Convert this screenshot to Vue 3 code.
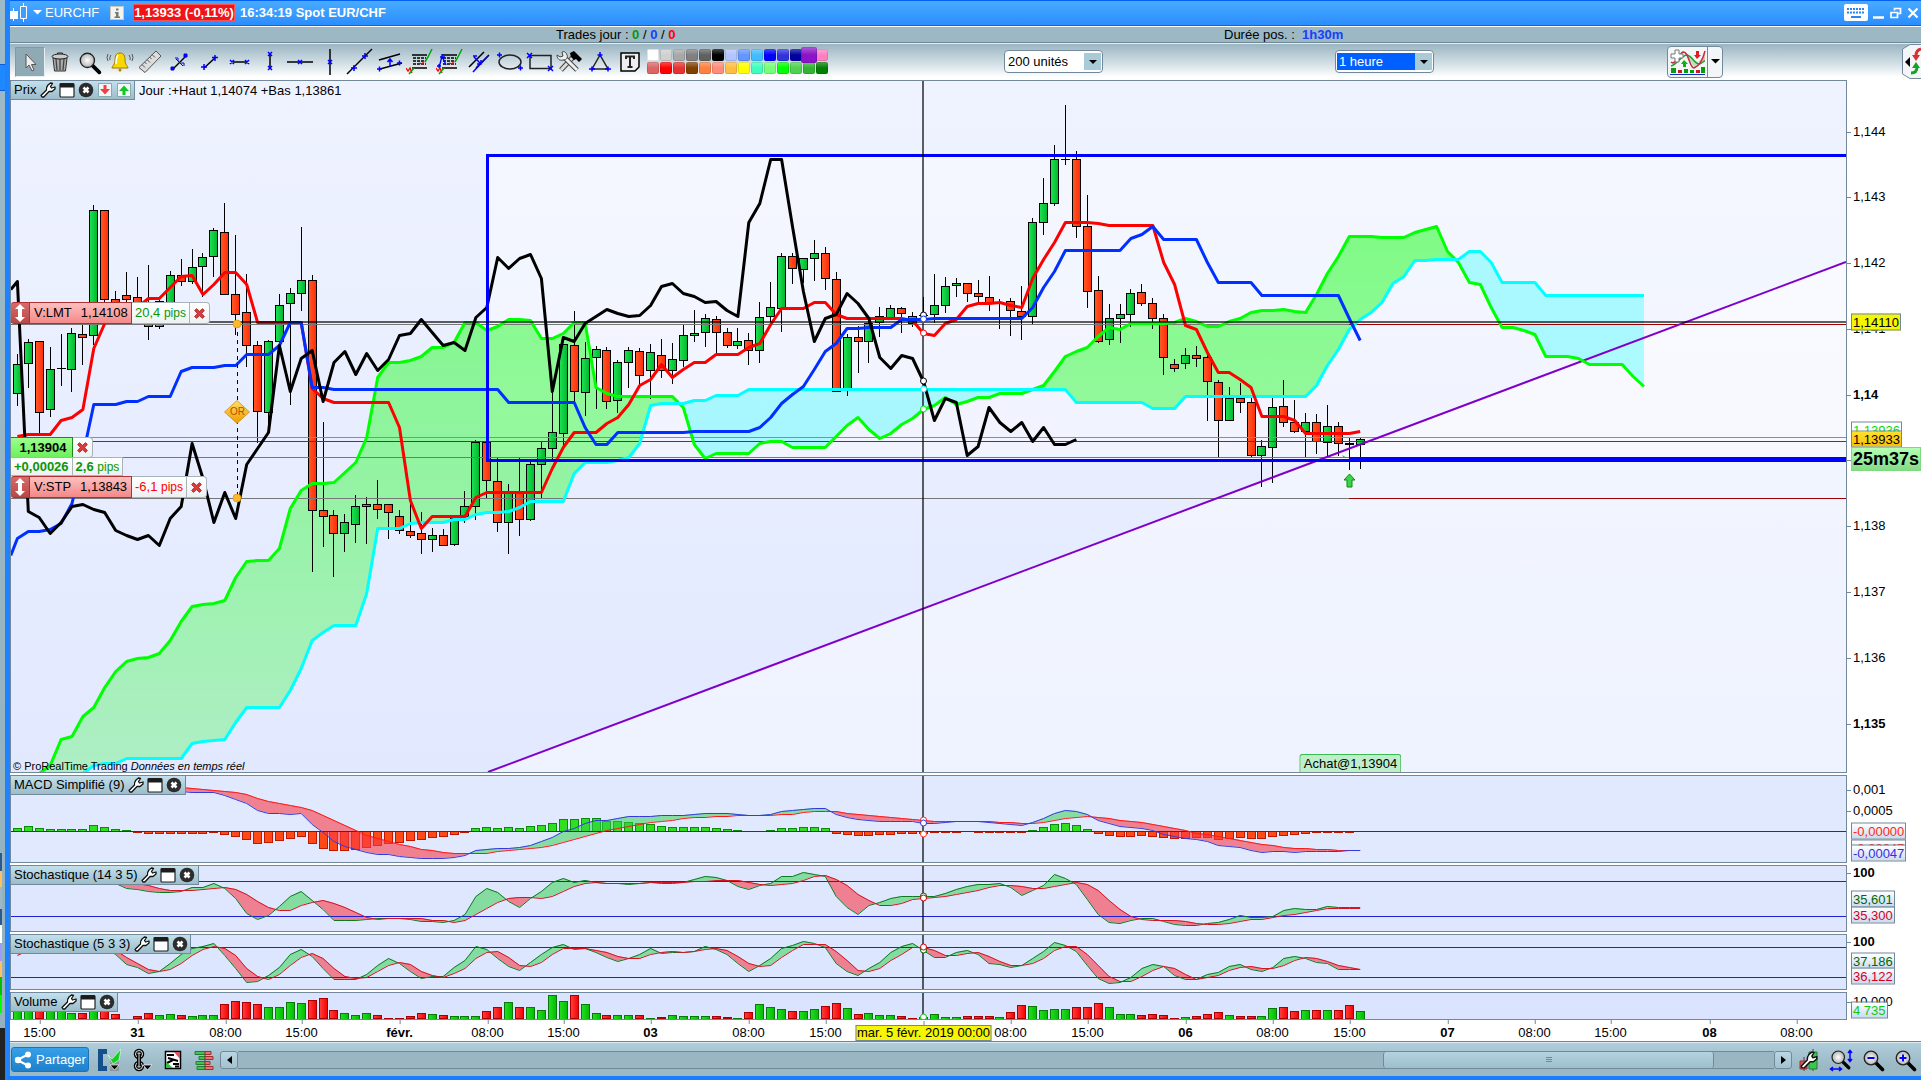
<script setup>
import { ref } from 'vue'

const STEP = 10.917
const LEFT = 11
const WIDTH = 1835
const bx = i => 17.4 + i * STEP
const px = i => Math.floor(bx(i))

// Series are written as "value" or "valuexcount" for repeated values.
const series = (text, start = 0) => {
  const out = []
  let i = start
  for (const part of text.trim().split(/\s+/)) {
    const [v, n] = part.split('x')
    for (let k = 0; k < Number(n || 1); k++) out.push([i++, Number(v)])
  }
  return out
}
const points = list => list.map(([i, y]) => bx(i).toFixed(1) + ',' + (y + 0.5)).join(' ')

// Area between two series, split wherever they cross.
const areas = (a, b) => {
  const mb = new Map(b)
  const both = a.filter(([i]) => mb.has(i)).map(([i, y]) => [i, y, mb.get(i)])
  let up = ''
  let down = ''
  for (let k = 0; k < both.length - 1; k++) {
    const [i0, a0, b0] = both[k]
    const [i1, a1, b1] = both[k + 1]
    const d0 = b0 - a0
    const d1 = b1 - a1
    const x0 = bx(i0)
    const x1 = bx(i1)
    if (d0 * d1 < 0) {
      const t = d0 / (d0 - d1)
      const xm = x0 + (x1 - x0) * t
      const ym = a0 + (a1 - a0) * t
      const first = `M${x0} ${a0}L${xm} ${ym}L${x0} ${b0}Z`
      const second = `M${xm} ${ym}L${x1} ${a1}L${x1} ${b1}Z`
      if (d0 > 0) { up += first; down += second } else { down += first; up += second }
    } else {
      const q = `M${x0} ${a0}L${x1} ${a1}L${x1} ${b1}L${x0} ${b0}Z`
      if (d0 + d1 >= 0) up += q
      else down += q
    }
  }
  return { up, down }
}

// colour, high, body top, body bottom, low
const candles = `g354,364,393,406 g339,342,363,388 r341,341,412,433 g347,369,409,417 d334,368,368,386 g328,333,369,392 r325,334,337,365
g205,210,335,345 r210,210,299,305 r291,299,310,312 r272,295,299,302 r277,297,310,315 r265,308,326,340 g300,301,326,329 g271,275,302,304
r259,275,281,286 g249,267,281,284 g253,257,266,297 g228,230,256,277 r203,232,294,294 r235,294,314,335 r274,312,345,367 r341,345,411,443
g340,341,412,430 g294,305,341,346 g288,293,303,405 g227,280,293,311 r275,280,510,572 r422,510,516,547 r510,515,533,577 g514,522,533,552
g495,506,524,543 g497,504,506,544 r480,504,509,519 r504,504,512,539 r510,516,530,534 r503,531,535,538 r512,533,539,554 g528,535,539,552
r529,535,545,546 g515,518,544,546 g491,506,516,523 g440,442,506,520 r442,442,480,499 r458,481,522,532 g484,493,522,554 r458,493,519,536
g462,464,519,521 g442,448,464,498 g387,432,448,460 g344,344,433,449 r311,345,391,402 g342,358,392,416 g346,349,357,409 r347,350,401,409
g360,362,400,413 g347,350,362,388 r348,351,375,385 g344,352,370,399 r339,355,370,378 g343,359,370,384 g325,335,360,367 g310,333,335,342
g314,318,332,347 r316,319,332,353 r328,332,345,348 g328,341,345,349 r333,340,350,365 g302,317,350,363 g282,307,316,322 g253,256,308,332
r253,256,268,284 g258,258,269,283 g240,253,258,281 r247,253,278,290 r272,279,391,391 g334,337,388,396 r326,337,341,373 g318,323,341,363
g307,316,322,337 g305,308,317,320 r307,308,313,333 g312,316,323,327 d297,315,315,322 g274,305,314,323 g277,286,305,313 g278,283,285,297
r283,283,293,302 r280,293,296,303 r276,297,303,311 d299,303,303,329 r298,301,310,336 r286,311,316,340 g218,222,316,324 g178,203,222,235
g145,159,203,206 d105,159,159,165 r151,159,226,238 r195,226,291,308 r276,290,341,343 g304,318,339,345 g304,314,318,343 g289,293,314,327
r284,292,303,306 r298,303,318,329 r314,318,357,375 r359,364,368,372 g348,355,363,369 r346,355,358,367 r355,357,381,421 r380,382,420,458
g387,398,420,420 r383,398,402,413 r398,402,455,457 g440,446,455,487 g398,407,447,483 r380,406,422,427 r400,422,431,433 g413,422,431,458
r414,422,441,454 g405,426,442,457 r422,426,443,456 d438,443,444,470 g437,439,444,469`.split(/\s+/).map((c, i) => {
  const [h, t, b, l] = c.slice(1).split(',').map(Number)
  return { x: px(i), kind: c[0], h, t, b, l }
})

const tenkan = series(`436 434x3 420 417 409 348 323 317 312 307 298x2 287 276 275 294 284 272x2 284 322x5 388 398 402x6 427 500 528 516x4 497 492x6 468 447
432x3 423 417 404 385 379 364 377 369 362x2 354x3 347 343 324 308x3 302x2 314 318x6 320 333 335 323 319 306 303x2 302 305 307 278 259 242 222x3 223 225x5
262 284 325 329 352 372x2 379 387 416x3 420 433x5 431`)
const kijun = [[-0.6, 555], ...series(`538 531x2 529 523 503 455 404x3 401x2 396x3 371 367x3 365x2 354x3 345 322x2 387x2 389x16 402x7 427 444x2 432x7 431x6 427 417 403 394 386 369 351 343
328x2 327x3 319x3 318x9 307 287 271 250x6 238 234 226 239x4 262 282x4 295x8 318 340`)]
const chikou = [[-0.6, 289], ...series(`281 511 517 533 522 506 504 509 512 530 535 539 535 545 518 506 443 478 522 492 518 464 448 432 345 391 358 350 401 362 351 374 353 370 359
335 333 319 332 345 342 350 317 307 257 268 258 254 278 391 337 341 323 316 309 313 316 315 305 286 283 293 296 302 301 310 316 222 203 159x2 226 291 341 318 314
293 303 318 357 368 355 358 381 420 398 402 455 446 407 422 431 422 441 427 444x2 439`)]
const spanA = series(`773x3 765 739 736 716 707 687 671 661 658 657 653 640 621 606 604 603 600 577 561 560x2 548 508 490 483x2 482 472 462 437 377 362x2 360 356 347x2
342 322x2 330 326 319x2 320 338x2 333 322x2 387 393 396x6 407 444 458 453x4 443 441x2 447x4 436 425 417 429 438 433 424 418 409 405 397 404 401 397x2 393x3 389 385 371 356
351 347 336 327 329 323x4 322 318 321 326x2 321 318 312 310x2 309 311 312 294 273 256 236x3 237x3 232 229 226 251 262 282 284 307 327x2 330 334 356x3 358 364x4 376 386`)
const spanB = series(`773x7 765 763x2 758x6 743 741 740 739 722 707x4 690 668 640 632 625x3 593 528x3 523 522x3 519x2 514 512x2 511 507 501x4 473 462x3 460 457 443 405 403x3
400x2 395x3 389x30 402x7 408x3 396x12 385 365 349 329 319 312 302 283 276 260x2 259x3 251x2 262 282x4 295x10`)
const cloud = areas(spanA, spanB)

const macd = series(`791x2 792x3 795 799 803 810 813x2 814 813 824 832 841 846 849 852 854x2 856 857 858x3 857 855 850 849 848x2 847 845 841 837 831 828 823 820x2 818 816x3 815x3
814 813x3 814 815x2 814 811 810 809 808x2 814 817 819 820 821x4 823x2 822 821x3 822 823 824 825 822 818 813 810 811 814 820 823 826 827 828 830 834 836 838 839 841
845 846 847 850 852 851x2 852 851x4 850x2`, 14)
const signal = series(`787x2 788 789 790 791 792 794 798 801 803 805 807 810 815 820 825 830 835 838 841 844 846 849 850 852 853x4 851 850 849 848 847 845 842 839 836 833 830
828 826 824 822 821 820 818 817x2 816x2 815x4 814x2 812 811x3 813 814 815 816 817 818 819 820 821x6 822x2 823x2 822 820 818 817 816 817 818 820 821 822 824 826 828
830 833 834 836 838 840 842 844 845 847 848x2 849x2 850x3`, 14)
const histogram = series(`3 5 3 2x4 6 4 2 1 -1 -3x6 -2 -4 -6 -9 -13 -12 -10 -8 -6 -13 -18 -20x2 -19 -17 -15 -13 -12 -10 -9 -7 -6 -4 -1 3 4 3 4 3 5 6 8 12x2 13x2 10x2 9 8 7 5
4x4 3 2 1 0x2 1 3x2 4x2 3 -3 -4 -5x2 -4x2 -3x3 -2 -1x2 0 -1x3 -2x2 1 4 7 8 6 2 -3 -5 -6x2 -5 -6 -7 -8x2 -7x2 -9 -8 -7 -8x2 -6 -5 -4 -3 -2 -1x3 0`)
const k14 = series(`883 888 889 891 892x2 891 887x2 883 888 898 913 919 915 906 896 891 900 909 920x3 919 918x3 919 921x2 922 920 914 896 888 892 901 907 898 891 882 878 882
880 882 883x2 884 883 882 883x2 882 879 876 877 880 886 889 885 883 876x2 872 874 876 896 907 914 905 902 898 896x4 893 889 886 884x2 883 887 895 890 885 874 878 884
899 914 922 923 920 918x2 921 924 925x2 923 922 919 915 917x2 916 910 908 909x2 906 907x3`, 9)
const d14 = series(`881 882 883 885 888 890x3 889 888 887 889 894 901 907 910x2 905 902 900 903 907 912 917 919 918x4 920x2 922 920 914 908 902 898 897x2 898 896 891 886 883 882
883x4 882x4 881x2 880x3 882 884 885 884 883 880 876 875 879 885 894 900 905x2 903 899 898 897 896 894 892 890 887 885x2 886 888x2 886 884 882 884 890 900 909 916 919
920x3 921 923 924x2 923 921 919x2 917 915 914 912 910 908x4`, 9)
const k5 = series(`952 946 944 940 938 936 938 942 948 954 964 967 973 971 963 954 948 946 943 955 968 982 981 975 967 954 949 956 968 979x3 974 965 958 963 971 978 976x2
967 960 946 949 958 966 970 962 954 947 944 949 948 952 957 961 958 954 948 953 952x2 951 946 949 954 963 971 965 958 948 945 941 943 947 963 971 975 968 962 952 946
943 950 957x2 952 950 954 963 964 967 965 958 951 942 945 951 965 978 983 982 977 968 964 966 975 979x2 974 972 966 964 969 971 967 958 956 958 962 963 969x3`)
const d5 = series(`955 950 947 944 941 939 938 940 944 950 957 963 969 971 969 963 955 949 946 948 955 968 976 979 974 965 957 953 958 968 976 978 977 971 965 962 964 971
975 977 973 968 958 952 951 957 965 966 962 954 948x3 950 952 956 958x2 954 952 951 952 951 949 948 950 956 963 966 965 957 950 944x3 951 960 970 971 968 960 954
947x2 950 955x2 953 952 956 961 965x2 963 958 950 946x2 954 965 976 981x2 976 970 966 968 974 979 977 975 970 967 966 968x2 965 960 957 958 961 965 967 969`)
// positive: rising bar, negative: falling bar
const volume = series(`8x2 -8 9 8 6 -6 8 -9 -5 0 -3 -6 4 5 -4 3 4x2 -15 -18 -17 -15 12x2 17 16 -19 -21 -9 6 4 6 -4 -1x2 -3 -6 5 -4 3x3 -8 -12 17 -12 12 9 24 18 -24 15 6 -4 4x2 -4
1 -2 4 3x3 -3 -2 1 -7 15 12 10 -8 8 10 -13 -16 11 -5 6 4x2 -3 -1 2 5 2x2 -3x3 2 -7 -14 13 9 10x2 -12x2 -16 12 5x2 -4 -5 -4 -1 2 -3 -5 -7 4 -3x2 3 11 -12 -8 9 -9 9 -9 -14 8`)

const bars = (list, base) => list.filter(([, v]) => v).map(([i, v]) => ({
  x: px(i) - 3.5,
  y: v > 0 || base === 1019 ? base - Math.abs(v) + 0.5 : base + 0.5,
  h: Math.max(Math.abs(v) - (v > 0 ? 0 : 1), 1),
  up: v > 0
}))

const panes = [
  {
    id: 'macd', title: 'MACD Simplifié (9)', top: 776, height: 86, levels: [831],
    bars: bars(histogram, 831), area: areas(macd, signal),
    lines: [{ c: 'm-red', p: points(signal) }, { c: 'm-blue', p: points(macd) }],
    dots: [[820, '#ff2020'], [834, '#ff4020'], [823, '#3030e0']],
    ticks: [{ y: 790, t: '0,001' }, { y: 811, t: '0,0005' }],
    tags: [{ y: 831, t: '-0,00000', c: '#ff2a10' }, { y: 848, t: '-0,00047', c: '#ff1010' }, { y: 853, t: '-0,00047', c: '#3030e0' }]
  },
  {
    id: 'sto14', title: 'Stochastique (14 3 5)', top: 866, height: 65, levels: [881, 916],
    bars: [], area: areas(k14, d14),
    lines: [{ c: 's-green', p: points(k14) }, { c: 's-red', p: points(d14) }],
    dots: [[896, '#006000'], [898, '#d00000']],
    ticks: [{ y: 873, t: '100', b: true }],
    tags: [{ y: 899, t: '35,601', c: '#006a00' }, { y: 915, t: '35,300', c: '#d0001c' }]
  },
  {
    id: 'sto5', title: 'Stochastique (5 3 3)', top: 935, height: 54, levels: [947, 977],
    bars: [], area: areas(k5, d5),
    lines: [{ c: 's-green', p: points(k5) }, { c: 's-red', p: points(d5) }],
    dots: [[950, '#006000'], [947, '#d00000']],
    ticks: [{ y: 942, t: '100', b: true }],
    tags: [{ y: 961, t: '37,186', c: '#006a00' }, { y: 976, t: '36,122', c: '#d0001c' }]
  },
  {
    id: 'vol', title: 'Volume', top: 993, height: 26, levels: [],
    bars: bars(volume, 1019), area: { up: '', down: '' }, lines: [],
    dots: [[1017, '#20c020']],
    ticks: [{ y: 1002, t: '10 000' }],
    tags: [{ y: 1010, t: '4 735', c: '#10c810' }]
  }
]
const MAIN = { top: 81, height: 691 }
const prices = [[132, '1,144'], [197, '1,143'], [263, '1,142'], [329, '1,141'], [395, '1,14'], [460, '1,139'], [526, '1,138'], [592, '1,137'], [658, '1,136'], [724, '1,135']]
const priceTags = [
  { y: 322, t: '1,14110', c: 'yellow' }, { y: 430, t: '1,13936', c: 'ask' }, { y: 439, t: '1,13933', c: 'gold' }, { y: 459, t: '25m37s', c: 'timer' }
]
const markers = [[315, '#000'], [319, '#0030ff'], [333, '#f00'], [381, '#000'], [389, '#0ff'], [409, '#00e800']]
const times = [
  [39, '15:00'], [137, '31', 1], [225, '08:00'], [301, '15:00'], [399, 'févr.', 1], [487, '08:00'], [563, '15:00'], [650, '03', 1], [748, '08:00'], [825, '15:00'],
  [1010, '08:00'], [1087, '15:00'], [1185, '06', 1], [1272, '08:00'], [1349, '15:00'], [1447, '07', 1], [1534, '08:00'], [1610, '15:00'], [1709, '08', 1], [1796, '08:00']
]
const topOf = (y, pane) => ((y - pane.top) / pane.height * 100).toFixed(3) + '%'
const leftOf = x => ((x + 0.5 - LEFT) / WIDTH * 100).toFixed(3) + '%'

const palette = [
  '#ffffff', '#d0d0d0', '#a8a8a8', '#808080', '#606060', '#000000', '#b4c4ff', '#6496ff', '#40bcff', '#0000ff', '#3232dc', '#0000a0', '#8c14c8', '#ff80c0',
  '#dc6464', '#ff0000', '#e63232', '#804000', '#ff8040', '#ff8c78', '#ffbe40', '#ffff00', '#40ffbe', '#78ff78', '#00ff00', '#50d250', '#32b432', '#008000'
]
const tools = ['Curseur', 'Supprimer', 'Loupe', 'Alerte', 'Règle', 'Segment', 'Ligne', 'Horizontal', 'Vertical', 'Droite horizontale', 'Droite verticale', 'Droite', 'Canal', 'Fibonacci', 'Projection', 'Parallèles', 'Ellipse', 'Rectangle', 'Outils', 'Triangle', 'Texte']
const active = ref(0)
const units = ref('200 unités')
const frame = ref('1 heure')
</script>

<template>
  <div class="desktop">
    <svg width="0" height="0" class="defs" aria-hidden="true">
      <defs>
        <linearGradient id="gUp"><stop offset="0" stop-color="#1fe356" /><stop offset="1" stop-color="#02b52b" /></linearGradient>
        <linearGradient id="gDown"><stop offset="0" stop-color="#ff5a28" /><stop offset="1" stop-color="#ff2c08" /></linearGradient>
        <linearGradient id="gVolUp"><stop offset="0" stop-color="#22e020" /><stop offset="1" stop-color="#04ba04" /></linearGradient>
        <linearGradient id="gVolDown"><stop offset="0" stop-color="#ff4040" /><stop offset="1" stop-color="#f60000" /></linearGradient>
        <linearGradient id="gCloud" x1="0" y1="81" x2="0" y2="772" gradientUnits="userSpaceOnUse"><stop offset="0" stop-color="#0f0" stop-opacity=".54" /><stop offset="1" stop-color="#0f0" stop-opacity=".23" /></linearGradient>
        <radialGradient id="gLens"><stop offset="0" stop-color="#fff" /><stop offset="1" stop-color="#b4b4b4" /></radialGradient>
        <linearGradient id="gGold" x1="0" y1="0" x2="0" y2="1"><stop offset="0" stop-color="#ffe060" /><stop offset="1" stop-color="#f09a00" /></linearGradient>
        <symbol id="wrench" viewBox="0 0 16 16"><path d="M2 15 1 13.500 6.500 8 Q6 5.500 8 3 L10.500 1 12.500 1.500 10.500 4.500 11.500 6 15 5 15 7 12 9.500 9 9.500 3.800 15Z" fill="#fff" stroke="#111" stroke-width="1.300" stroke-linejoin="round" /></symbol>
        <symbol id="pane" viewBox="0 0 16 16"><rect x="1" y="1.500" width="14" height="13.500" rx="1" fill="#fff" stroke="#222" stroke-width="1.200" /><path d="M1 1.500h14v4H1z" fill="#1c1c1c" /></symbol>
        <symbol id="shut" viewBox="0 0 16 16"><circle cx="8" cy="8" r="7.300" fill="#2c2c2c" /><path d="M5.500 5.500l5 5m0-5l-5 5" stroke="#fff" stroke-width="2.600" /></symbol>
        <symbol id="cross" viewBox="0 0 12 12"><path d="M1.500 3.200 3.200 1.500 6 4 8.800 1.500 10.500 3.200 8 6 10.500 8.800 8.800 10.500 6 8 3.200 10.500 1.500 8.800 4 6Z" fill="#d83c3c" stroke="#a82828" stroke-width=".8" /></symbol>
        <symbol id="lens" viewBox="0 0 24 24"><path d="M13.500 13.500 20.500 20.500" stroke="#000" stroke-width="3.600" stroke-linecap="round" /><circle cx="9" cy="9" r="6.800" fill="url(#gLens)" stroke="#222" stroke-width="1.300" /></symbol>
      </defs>
    </svg>

    <div class="behind"><i class="sel"></i><i class="blocks"></i></div>
    <main class="window">
      <header class="title">
        <svg width="18" height="19" viewBox="0 0 18 19"><path d="M3.500 5v13M13.500 0v19" stroke="#fff" /><path d="M0 8h8v8H0z" fill="#fff" /><path d="M10.500 3.500h6v12h-6z" fill="#3c9fff" stroke="#fff" /></svg>
        <svg class="tri" width="9" height="5" viewBox="0 0 9 5"><path d="M0 0h9L4.500 4.500z" fill="#fff" /></svg>
        <span class="sym">EURCHF</span>
        <svg class="info-i" width="14" height="14" viewBox="0 0 14 14"><rect x=".5" y=".5" width="13" height="13" fill="#f4f4ee" stroke="#c8c8c0" /><path d="M6 2.500h2.500v2H6zM5 6h3.500v4.500H10V12H4.500v-1.500H6v-3H5z" fill="#777" /></svg>
        <b class="quote">1,13933 (-0,11%)</b>
        <b class="clock">16:34:19 Spot EUR/CHF</b>
        <span class="grow"></span>
        <svg width="24" height="17" viewBox="0 0 24 17"><rect width="24" height="17" rx="2" fill="#fff" /><path d="M3 5h18M3 8.500h18" stroke="#2a86f0" stroke-width="2" stroke-dasharray="2 1" /><path d="M7 13h10" stroke="#2a86f0" stroke-width="2" /></svg>
        <button class="wbtn" aria-label="Réduire"><svg width="12" height="12" viewBox="0 0 12 12"><path d="M0 10.500h11" stroke="#fff" stroke-width="2.500" /></svg></button>
        <button class="wbtn" aria-label="Restaurer"><svg width="12" height="12" viewBox="0 0 12 12"><path d="M4.500 3.500v-2h6v5h-2M1 5.500h6.500v5H1z" fill="none" stroke="#fff" stroke-width="1.700" /></svg></button>
        <button class="wbtn" aria-label="Fermer"><svg width="12" height="12" viewBox="0 0 12 12"><path d="M1.500 1.500l9 9m0-9l-9 9" stroke="#fff" stroke-width="2.200" /></svg></button>
      </header>

      <div class="status">
        <span></span>
        <span>Trades jour : <b class="ok">0</b> / <b class="bl">0</b> / <b class="rd">0</b></span>
        <span>Durée pos. :&nbsp; <b class="bl">1h30m</b></span>
      </div>

      <div class="toolbar">
        <div class="tools">
          <button v-for="(t, i) in tools" :key="t" class="tool" :class="{ on: active === i }" :aria-label="t" @click="active = i">
            <svg width="28" height="28" viewBox="0 0 28 28" fill="none">
              <path v-if="i === 0" d="M10 6v14l3-3 3 6 2-1-2.500-5.500h4.500z" fill="#eee" stroke="#555" />
              <g v-if="i === 1"><path d="M7 10l1.500 13h11L21 10z" fill="#aaa" stroke="#333" /><path d="M10 11l1 11M14 11v11M18 11l-1 11" stroke="#444" stroke-width="1.300" /><ellipse cx="14" cy="8.500" rx="8" ry="2.500" fill="#ccc" stroke="#222" /><path d="M11.500 6V5h5v1" stroke="#222" /></g>
              <use v-if="i === 2" href="#lens" x="2" y="3" width="25" height="25" />
              <g v-if="i === 3"><path d="M14 5c4 0 5 3 5 7 0 5 3 6 3 8H6c0-2 3-3 3-8 0-4 1-7 5-7z" fill="#f8d800" stroke="#a07800" /><path d="M12 7q-2 3-2 9" stroke="#fff" stroke-width="1.500" /><circle cx="14" cy="22" r="1.500" fill="#b08000" /><path d="M5 7q-2 3-1 5M2 6q-2 4 0 7M23 7q2 3 1 5M26 6q2 4 0 7" stroke="#555" /></g>
              <g v-if="i === 4"><path d="M3 19.500 20 3l5 5L9 24.500z" fill="#ddd" stroke="#555" /><path d="M6 16.500l3 3M8.500 14l2 2M11 11.500l3 3M13.500 9l2 2M16 6.500l3 3" stroke="#555" /></g>
              <g v-if="i === 5"><path d="M7 21 20 8" stroke="#000" stroke-width="1.500" /><path d="M5 19h3v3H5zM18 6h3v3h-3z" fill="#0000ff" stroke="#0000ff" /><path d="M9 10h3v3M18 18v-3h-3M10 11l7 7" stroke="#0000ff" /></g>
              <g v-if="i === 6"><path d="M8 20 20 9" stroke="#000" stroke-width="1.500" /><path d="M5 19h6M8 16v6M16 9.500h6M19 7v6" stroke="#00f" stroke-width="1.500" /></g>
              <g v-if="i === 7"><path d="M7 14h14" stroke="#000" stroke-width="1.500" /><path d="M4 12l4 4m0-4l-4 4M19 12l4 4m0-4l-4 4" stroke="#00f" stroke-width="1.500" /></g>
              <g v-if="i === 8"><path d="M14 7v14" stroke="#000" stroke-width="1.500" /><path d="M12 4l4 4m0-4l-4 4M12 18l4 4m0-4l-4 4" stroke="#00f" stroke-width="1.500" /></g>
              <g v-if="i === 9"><path d="M1 14h26" stroke="#000" stroke-width="1.500" /><path d="M12 12l4 4m0-4l-4 4" stroke="#00f" stroke-width="1.500" /></g>
              <g v-if="i === 10"><path d="M14 1v26" stroke="#000" stroke-width="1.500" /><path d="M12 12l4 4m0-4l-4 4" stroke="#00f" stroke-width="1.500" /></g>
              <g v-if="i === 11"><path d="M1 26 26 1" stroke="#000" stroke-width="1.500" /><path d="M5 20h6M8 17v6M16 8h6M19 5v6" stroke="#00f" stroke-width="1.500" /></g>
              <g v-if="i === 12"><path d="M3 12 24 6M4 21l22-6" stroke="#000" stroke-width="1.500" /><path d="M1 21h5M3.500 18.500v5M21 15h5M23.500 12.500v5M14 19v-7M11.500 14l2.500-3 2.500 3" stroke="#00f" stroke-width="1.500" /></g>
              <g v-if="i === 13 || i === 14"><path d="M6 7h15M6 20h15" stroke="#000" stroke-width="1.500" /><path d="M7 10h13M7 13h13M7 16h13" stroke="#000" stroke-width="1.500" stroke-dasharray="3 1" /><path d="M0 20l2 3 2-3 2 5" stroke="#f00" stroke-width="1.300" /><path d="M3 26 8 20M19 14l3-5 4-8" stroke="#00a800" stroke-width="1.500" /><path d="M13 15l3 1 2-3" stroke="#f00" stroke-width="1.300" /><path v-if="i === 14" d="M3 20 6 8l4 9M1 18h4M3 16v4M4 9h5M6 6v5" stroke="#00f" stroke-width="1.300" /></g>
              <g v-if="i === 15"><path d="M3 19 18 4M10 20 23 7" stroke="#000" stroke-width="1.500" /><path d="M7 24 22 8M8 9l7 7M15 12v4h-4M7 8h4" stroke="#00f" stroke-width="1.500" /></g>
              <g v-if="i === 16"><ellipse cx="14" cy="14" rx="11" ry="7" stroke="#222" stroke-width="1.500" /><path d="M1 7h5M3.500 4.500v5M22 20h5M24.500 17.500v5" stroke="#00f" stroke-width="1.500" /></g>
              <g v-if="i === 17"><path d="M4 7.500h21v13H4z" stroke="#222" stroke-width="1.500" /><path d="M1 5l5 5m0-5l-5 5M22 18l5 5m0-5l-5 5" stroke="#00f" stroke-width="1.500" /></g>
              <g v-if="i === 18"><path d="M5 22 18 8" stroke="#444" stroke-width="5" /><path d="M5 22 18 8" stroke="#ddd" stroke-width="3" /><path d="M14 5l4-2 8 8-3 3-3-3-2 1-3-3z" fill="#000" /><path d="M21 22 9 10" stroke="#444" stroke-width="5" /><path d="M21 22 9 10" stroke="#eee" stroke-width="3" /><path d="M6 4l1 4-3 1-3-2c0 4 3 6 6 5 4 0 5-3 4-5-1-3-3-4-5-3z" fill="#eee" stroke="#444" /></g>
              <g v-if="i === 19"><path d="M14 7 6 21h16z" stroke="#222" stroke-width="1.500" /><path d="M11.500 7h5M14 4v5M3 21h6M6 18.500v5M19 21h6M22 18.500v5" stroke="#00f" stroke-width="1.500" /></g>
              <g v-if="i === 20"><path d="M5 5h18v14l-4 4H5z" fill="#eee" stroke="#000" stroke-width="1.500" /><path d="M10 11V8.500h8V11M14 9v10M11.500 19h5" stroke="#222" stroke-width="2" /></g>
            </svg>
          </button>
          <div class="palette">
            <button v-for="(c, i) in palette" :key="i" class="swatch" :class="{ picked: i === 12 }" :style="{ backgroundColor: c }" :aria-label="c"></button>
          </div>
        </div>
        <div class="pick">
          <select v-model="units" aria-label="Nombre d'unités"><option>200 unités</option><option>500 unités</option></select>
          <i></i>
        </div>
        <div class="pick hot">
          <select v-model="frame" aria-label="Unité de temps"><option>1 heure</option><option>4 heures</option></select>
          <i></i>
        </div>
        <div class="split">
          <button aria-label="Ajouter un indicateur">
            <svg width="36" height="26" viewBox="0 0 36 26" fill="none"><path d="M16 6l8 12 5-4-6-4-5-4z" fill="#bfe0b8" /><path d="M28 13l4-3 3-8v11z" fill="#f4b8b8" /><path d="M1 17C6 16 12 6 17 6c5 1 8 9 12 9 3 0 4-3 6-3" stroke="#1fa02c" stroke-width="1.500" /><path d="M1 13c4 4 7-7 12-10 6-1 6 16 11 16 5-2 9-9 11-17" stroke="#c03040" stroke-width="1.500" /><path d="M1 19h5v5H1zM14 20h4v4h-4zM20 21h4v3h-4zM31 18h4v6h-4z" fill="#0a9a0a" /><path d="M8 21h4v3H8zM26 21h4v3h-4z" fill="#c02020" /><path d="M0 25.500h35" stroke="#1030c0" /><path d="M14 11l-3 4h2v3h3v-3h2z" fill="#10b010" /><path d="M27 10l-3-4h2V2h3v4h2z" fill="#e02020" /><path d="M5 1h4v4h4v4H9v4H5V9H1V5h4z" fill="#fff" stroke="#777" /></svg>
          </button>
          <button class="more" aria-label="Plus"><svg width="9" height="5" viewBox="0 0 9 5"><path d="M0 0h9L4.500 4.500z" /></svg></button>
        </div>
        <button class="edge" aria-label="Ordres"><svg width="19" height="35" viewBox="0 0 19 35"><path d="M19 .5H8L.5 5v25L8 34.500h11" fill="#f2f6f8" stroke="#71899a" /><path d="M8 13v10l-5-5z" /><path d="M19 5q-5 1-5 7" fill="none" stroke="#d83030" stroke-width="3" /><path d="M10 11h8l-4 6z" fill="#d83030" /><path d="M9 29q6 0 6-6" fill="none" stroke="#18a028" stroke-width="3" /><path d="M10 24h8l-4-6z" fill="#18a028" /></svg></button>
      </div>

      <section id="chart" class="pane-row main-row">
        <div class="plot main-plot">
          <svg class="draw" viewBox="11 81 1835 691" preserveAspectRatio="none">
            <path d="M488 156H1846V460H488Z" fill="#fff" opacity=".38" />
            <path d="M488 772 1846 262V772Z" fill="#fff" opacity=".44" />
            <path :d="cloud.up" fill="url(#gCloud)" />
            <path :d="cloud.down" fill="#0ff" opacity=".3" />
            <g shape-rendering="crispEdges">
              <g v-for="c in candles" :key="c.x">
                <path :d="`M${c.x + 0.5} ${c.h}V${c.l}`" stroke="#000" />
                <path v-if="c.kind === 'd'" :d="`M${c.x - 4} ${c.t + 0.5}h9`" stroke="#000" :stroke-width="c.b - c.t + 1" />
                <rect v-else :x="c.x - 3.5" :y="c.t + 0.5" width="8" :height="c.b - c.t" :fill="c.kind === 'g' ? 'url(#gUp)' : 'url(#gDown)'" stroke="#000" />
              </g>
            </g>
            <g shape-rendering="crispEdges">
              <path d="M11 437.500H1846" stroke="#00f000" /><path d="M11 441.500H1846" stroke="#e00000" />
              <path d="M11 457.500H1349M11 498.500H1349M11 324.500H1349" stroke="#777" />
              <path d="M1349 498.500H1846M1349 324.500H1846" stroke="#a00000" />
            </g>
            <path d="M488 772 1846 262" stroke="#8000c8" stroke-width="2" />
            <g fill="none" stroke-width="3" stroke-linejoin="round">
              <polyline :points="points(spanA)" stroke="#00ff00" />
              <polyline :points="points(spanB)" stroke="#00ffff" />
              <polyline :points="points(tenkan)" stroke="#ff0000" />
              <polyline :points="points(kijun)" stroke="#0030ff" />
              <polyline :points="points(chikou)" stroke="#000" />
            </g>
            <path d="M1846 155.500H487.500V460.500H1846" fill="none" stroke="#0000ff" stroke-width="3" />
            <path d="M1349 459.500H1846" stroke="#0000ff" stroke-width="5" />
            <path d="M11 322H1846M923 81V772" stroke="#000" stroke-opacity=".62" stroke-width="2" shape-rendering="crispEdges" />
            <path d="M237.500 324V498" stroke="#000" stroke-dasharray="4 4" />
            <g fill="#fdb92c" stroke="#d98a00" stroke-width=".6"><circle cx="237" cy="324" r="4" /><circle cx="237" cy="498" r="4" /></g>
            <path d="M237 400.500 249.500 412 237 423.500 224.500 412Z" fill="url(#gGold)" stroke="#c98200" stroke-width=".7" />
            <path d="M1349.500 474l5.500 6h-3v7h-5v-7h-3z" fill="#3cd24a" stroke="#0a8a10" /><path d="M1342 455l5 3h-3z" fill="#20b030" />
            <circle v-for="m in markers" :key="m[0]" cx="923.500" :cy="m[0]" r="3" fill="#fff" :stroke="m[1]" />
          </svg>
          <div class="head">
            <span>Prix</span>
            <button aria-label="Réglages"><svg width="16" height="16"><use href="#wrench" /></svg></button>
            <button aria-label="Agrandir"><svg width="16" height="16"><use href="#pane" /></svg></button>
            <button aria-label="Fermer"><svg width="16" height="16"><use href="#shut" /></svg></button>
            <button aria-label="Descendre"><svg width="16" height="16" viewBox="0 0 16 16"><path d="M1.500 1.500h13v13h-13z" fill="#f2f6fa" stroke="#8aa" /><path d="M6.500 3h3v4H13l-5 5.500L3 7h3.500z" fill="#f24040" /></svg></button>
            <button aria-label="Monter"><svg width="16" height="16" viewBox="0 0 16 16"><path d="M1.500 1.500h13v13h-13z" fill="#f2f6fa" stroke="#8aa" /><path d="M6.500 13h3V9H13L8 3.500 3 9h3.500z" fill="#10c820" /></svg></button>
          </div>
          <p class="range">Jour :+Haut 1,14074 +Bas 1,13861</p>
          <span class="or" :style="{ top: topOf(412, MAIN), left: leftOf(237) }">OR</span>
          <div class="order" :style="{ top: topOf(302, MAIN) }">
            <span class="grip"><svg width="10" height="18" viewBox="0 0 10 18"><path d="M5 0l5 5H7v8h3l-5 5-5-5h3V5H0z" fill="#fff" /></svg></span>
            <span class="sell">V:LMT<em>1,14108</em></span><span class="gain">20,4 <small>pips</small></span>
            <button class="kill" aria-label="Annuler"><svg width="13" height="13"><use href="#cross" /></svg></button>
          </div>
          <div class="order low" :style="{ top: topOf(437, MAIN) }">
            <b class="entry">1,13904</b>
            <button class="kill" aria-label="Clôturer"><svg width="13" height="13"><use href="#cross" /></svg></button>
          </div>
          <div class="order thin" :style="{ top: topOf(457, MAIN) }"><b class="gain">+0,00026</b><span class="gain"><b>2,6</b> <small>pips</small></span></div>
          <div class="order" :style="{ top: topOf(476, MAIN) }">
            <span class="grip"><svg width="10" height="18" viewBox="0 0 10 18"><path d="M5 0l5 5H7v8h3l-5 5-5-5h3V5H0z" fill="#fff" /></svg></span>
            <span class="sell">V:STP<em>1,13843</em></span><span class="gain loss">-6,1 <small>pips</small></span>
            <button class="kill" aria-label="Annuler"><svg width="13" height="13"><use href="#cross" /></svg></button>
          </div>
          <p class="credit">© ProRealTime Trading <i>Données en temps réel</i></p>
          <span class="buy" :style="{ left: leftOf(1350) }">Achat@1,13904</span>
        </div>
        <div class="scale">
          <span v-for="p in prices" :key="p[1]" class="tick" :class="{ strong: p[1] === '1,14' || p[1] === '1,135' }" :style="{ top: topOf(p[0], MAIN) }">{{ p[1] }}</span>
          <span v-for="t in priceTags" :key="t.t" class="tag" :class="t.c" :style="{ top: topOf(t.y, MAIN) }">{{ t.t }}</span>
        </div>
      </section>

      <section v-for="p in panes" :key="p.id" class="pane-row" :class="p.id">
        <div class="plot">
          <svg class="draw" :viewBox="`11 ${p.top} 1835 ${p.height}`" preserveAspectRatio="none">
            <g shape-rendering="crispEdges" :class="p.id === 'vol' ? 'vols' : 'hist'">
              <rect v-for="b in p.bars" :key="b.x" :x="b.x" :y="b.y" width="8" :height="b.h" :class="b.up ? 'up' : 'down'" />
            </g>
            <path :d="p.area.up" fill="#2fd24a" fill-opacity=".52" />
            <path :d="p.area.down" fill="#f83c48" fill-opacity=".6" />
            <path v-for="l in p.levels" :key="l" :d="`M11 ${l + 0.5}H1846`" stroke="#2020d8" shape-rendering="crispEdges" />
            <polyline v-for="l in p.lines" :key="l.c" :class="l.c" :points="l.p" fill="none" />
            <path :d="`M923 ${p.top}v${p.height}`" stroke="#000" stroke-opacity=".62" stroke-width="2" shape-rendering="crispEdges" />
            <circle v-for="d in p.dots" :key="d[0]" cx="923.500" :cy="d[0]" r="3" fill="#fff" :stroke="d[1]" />
          </svg>
          <div class="head">
            <span>{{ p.title }}</span>
            <button aria-label="Réglages"><svg width="16" height="16"><use href="#wrench" /></svg></button>
            <button aria-label="Agrandir"><svg width="16" height="16"><use href="#pane" /></svg></button>
            <button aria-label="Fermer"><svg width="16" height="16"><use href="#shut" /></svg></button>
          </div>
        </div>
        <div class="scale">
          <span v-for="t in p.ticks" :key="t.t" class="tick" :class="{ strong: t.b }" :style="{ top: topOf(t.y, p) }">{{ t.t }}</span>
          <span v-for="t in p.tags" :key="t.y" class="tag" :style="{ top: topOf(t.y, p), color: t.c }">{{ t.t }}</span>
        </div>
      </section>

      <div class="times">
        <div class="track-t">
          <span v-for="t in times" :key="t[0]" class="time" :class="{ strong: t[2] }" :style="{ left: leftOf(t[0]) }">{{ t[1] }}</span>
          <span class="time cursor" :style="{ left: leftOf(923) }">mar. 5 févr. 2019 00:00</span>
        </div>
      </div>

      <footer class="foot">
        <button class="share"><svg width="18" height="18" viewBox="0 0 18 18"><path d="M15 3 3 9l12 6" fill="none" stroke="#fff" stroke-width="2" /><g fill="#fff"><circle cx="14" cy="3.500" r="3" /><circle cx="4" cy="9" r="3.200" /><circle cx="14" cy="14.500" r="3" /></g></svg>Partager</button>
        <button class="fb" aria-label="Liste"><svg width="24" height="24" viewBox="0 0 24 24"><path d="M10 3.500H3.500v17H10" fill="none" stroke="#14508c" stroke-width="5" /><path d="M13 10h9v13h-9z" fill="#8a98a0" /><path d="M11 7l4 4 9-10-2 11-6 4z" fill="#10d020" stroke="#fff" stroke-width=".6" /><path d="M13 17h9l-4.500 5z" stroke="#fff" stroke-width=".7" /></svg></button>
        <button class="fb" aria-label="Lien"><svg width="24" height="24" viewBox="0 0 24 24"><g fill="none" stroke="#000" stroke-width="3.500"><circle cx="10" cy="6" r="3.500" /><circle cx="10" cy="18" r="3.500" /></g><g fill="none" stroke="#e8e8e8"><circle cx="10" cy="6" r="3.500" /><circle cx="10" cy="18" r="3.500" /></g><path d="M10 6v12" stroke="#000" stroke-width="4" /><path d="M10 6v12" stroke="#ddd" /><path d="M14 17h9l-4.500 5z" stroke="#fff" stroke-width=".7" /></svg></button>
        <button class="fb" aria-label="Journal"><svg width="24" height="24" viewBox="0 0 24 24"><path d="M4.500 3.500h15v17h-15z" fill="#fff" stroke="#000" stroke-width="1.500" /><path d="M6 7h7M7 10l10 3M6 15l6-3M12 16h6M14 18.500h4" stroke="#000" stroke-width="2" /><path d="M13 4h6v7z" fill="#e05060" /><path d="M5 14v6h7z" fill="#30c040" /></svg></button>
        <button class="fb" aria-label="Carnet"><svg width="24" height="24" viewBox="0 0 24 24"><path d="M12 3v18" stroke="#444" /><g fill="#3cc850" stroke="#277a33"><path d="M2 3.500h10v3H2zM6 8.500h6v3H6zM3 13.500h9v3H3zM4 18.500h8v3H4z" /></g><g fill="#f07070" stroke="#933"><path d="M12 3.500h6v3h-6zM12 8.500h8v3h-8zM12 13.500h5v3h-5zM12 18.500h8v3h-8z" /></g></svg></button>
        <div class="scroll" role="scrollbar" aria-label="Défilement" aria-controls="chart" aria-valuenow="85">
          <button aria-label="Gauche"><svg width="5" height="8" viewBox="0 0 5 8"><path d="M5 0v8L0 4z" /></svg></button>
          <div class="rail"><span></span><span class="thumb"><i></i></span><span></span></div>
          <button aria-label="Droite"><svg width="5" height="8" viewBox="0 0 5 8"><path d="M0 0v8l5-4z" /></svg></button>
        </div>
        <button class="fz" aria-label="Réglages"><svg width="24" height="24" viewBox="0 0 24 24"><path d="M16 1v22M7 9v14" stroke="#444" /><path d="M12 4h8v17h-8z" fill="#3cc850" stroke="#277a33" /><path d="M3 13h7v8H3z" fill="#e05050" stroke="#933" /><use href="#wrench" x="3" y="3" width="18" height="18" /></svg></button>
        <button class="fz" aria-label="Ajuster"><svg width="24" height="24" viewBox="0 0 24 24"><use href="#lens" x="1" y="1" width="22" height="22" /><path d="M21 3v10M19 5l2-2.500 2 2.500M19 11l2 2.500 2-2.500M2 21h10M4 19l-2.500 2L4 23M10 19l2.500 2-2.500 2" fill="none" stroke="#00f" stroke-width="1.500" /></svg></button>
        <button class="fz" aria-label="Zoom arrière"><svg width="24" height="24" viewBox="0 0 24 24"><use href="#lens" x="1" y="1" width="24" height="24" /><path d="M6.500 10h7" stroke="#00f" stroke-width="2" /></svg></button>
        <button class="fz" aria-label="Zoom avant"><svg width="24" height="24" viewBox="0 0 24 24"><use href="#lens" x="1" y="1" width="24" height="24" /><path d="M6.500 10h7M10 6.500v7" stroke="#00f" stroke-width="2" /></svg></button>
      </footer>
    </main>
  </div>
</template>

<style>
body { margin: 0; background: #fff; }
</style>
<style scoped>
* { box-sizing: border-box; }
button { margin: 0; padding: 0; border: 0; background: none; font: inherit; color: inherit; display: flex; align-items: center; justify-content: center; }
p { margin: 0; }
svg { display: block; flex: none; }
.defs { position: absolute; }
.desktop { display: flex; min-height: 100vh; font: 13px/16px "Liberation Sans", Arial, sans-serif; color: #000; background: #fff; }
.behind { width: 6px; flex: none; display: flex; flex-direction: column; background: linear-gradient(#9cbac7, #93b2bf 95.2%, #222 95.2%); border-right: 1px solid #5c7785; padding-top: 64px; }
.sel { height: 27px; background: #1e88ff; border: solid #0a5bd8; border-width: 1px 0; }
.blocks { width: 2px; height: 160px; margin-top: auto; margin-bottom: 67px; background: linear-gradient(#2c5a8f 0 18px, #ffc060 18px 34px, #9fb8c4 34px 56px, #2c5a8f 56px 72px, #fff 72px 90px, #9c9cff 90px 108px, #ffc060 108px 124px, #00c000 124px 142px, #00ff00 142px); }
.window { flex: 1; min-width: 0; display: flex; flex-direction: column; border-left: 4px solid #1f82ff; border-bottom: 4px solid #1a7dff; }

.title { height: 27px; display: flex; align-items: center; background: linear-gradient(#48abff, #2a8cff); border-top: 1px solid #0062f4; border-bottom: 1px solid #fff; box-shadow: inset 0 -1px #0066ff; color: #fff; padding: 0 2px 2px 0; }
.tri { margin: 0 3px 0 5px; }
.sym { width: 65px; }
.info-i { margin-right: 9px; }
.quote { background: #f01418; border: 1px solid #ff5050; height: 17px; line-height: 15px; width: 102px; text-align: center; white-space: nowrap; margin-right: 5px; }
.clock { white-space: nowrap; }
.grow { flex: 1; }
.wbtn { width: 12px; height: 12px; margin-left: 5px; }

.status { height: 16px; display: grid; grid-template-columns: 546fr 668fr 697fr; background: #9bb8c4; border-bottom: 1px solid #6d8794; line-height: 15px; white-space: nowrap; }
.ok { color: #0a960a; } .bl { color: #1440ff; } .rd { color: #f00; }

.toolbar { height: 37px; display: grid; grid-template-columns: 994fr 331fr 332fr 235fr 19px; align-items: center; background: linear-gradient(#9bb5c2, #d3e0e6 55%, #fff 92%); border-top: 1px solid #e4eef2; padding-bottom: 1px; }
.tools { display: flex; align-items: center; padding-left: 5px; }
.tool { width: 30px; height: 30px; }
.tool.on { background: #8fa9b5; border: 1px solid #7f9aa6; border-right-color: #e8eff2; border-bottom-color: #e8eff2; }
.palette { display: grid; grid-template-columns: repeat(14, 13px); grid-auto-rows: 13px; margin-left: 2px; }
.swatch { width: 12px; height: 12px; border-radius: 2px; background-image: linear-gradient(rgba(255, 255, 255, .3), rgba(255, 255, 255, 0) 50%); box-shadow: inset 0 0 0 1px rgba(0, 0, 0, .12); }
.swatch.picked { width: 16px; height: 16px; margin: -2px; z-index: 1; }
.pick { position: relative; width: 99px; height: 23px; }
.pick select { width: 100%; height: 100%; appearance: none; border: 1px solid #71899a; border-radius: 4px; padding: 0 3px; font: inherit; color: #000; background: #fff; }
.pick.hot select { color: #fff; background: linear-gradient(#0060ff, #0060ff) 1px 2px / 78px 17px no-repeat #fff; }
.pick i { position: absolute; right: 2px; top: 3px; width: 17px; height: 17px; background: #a9cad7; pointer-events: none; }
.pick i::after { content: ""; position: absolute; left: 5px; top: 7px; border: 4px solid transparent; border-top-color: #000; border-bottom: 0; }
.split { display: flex; width: 56px; height: 32px; border: 1px solid #71899a; border-radius: 4px; background: #f3f6f8; }
.split button { flex: 1; }
.split .more { flex: 0 0 15px; border-left: 1px solid #71899a; }

.pane-row { display: flex; flex: none; margin-bottom: 2px; }
.plot { flex: 1; min-width: 0; position: relative; border: 1px solid #71899a; overflow: hidden; }
.draw { position: absolute; inset: 0; width: 100%; height: 100%; }
.main-row { flex: 1 0 400px; }
.main-plot { background: linear-gradient(#eff3ff, #e2e9ff); }
.macd { height: 88px; } .macd .plot { background: #e1e9ff; }
.sto14 { height: 67px; } .sto14 .plot { background: #dfe7ff; }
.sto5 { height: 56px; } .sto5 .plot { background: #dde6ff; }
.vol { height: 28px; margin-bottom: 0; } .vol .plot { background: #dae4ff; }
.head { position: relative; display: inline-flex; align-items: center; vertical-align: top; height: 19px; padding: 0 1px 0 3px; border: solid #71899a; border-width: 0 1px 1px 0; background: linear-gradient(#c3e0ec, #9cbccb); white-space: nowrap; }
.head span { margin-right: 2px; }
.head button { width: 19px; height: 18px; }
.range { position: absolute; left: 128px; top: 2px; }
.or { position: absolute; transform: translate(-50%, -50%); font-size: 10px; color: #b05000; }
.order { position: absolute; left: 0; height: 22px; display: flex; white-space: nowrap; line-height: 20px; }
.order > * { border: 1px solid #a9b4ba; border-left-width: 0; background: linear-gradient(#fff, #edf1f3); height: 100%; }
.order .grip { width: 19px; background: linear-gradient(#d86a6a, #b84848); border-color: #b03030; border-radius: 3px 0 0 3px; display: flex; align-items: center; justify-content: center; }
.order .sell { width: 102px; padding-left: 4px; background: linear-gradient(#ffc0c0, #f48888); border-color: #b03030; }
.sell em { font-style: normal; margin-left: 9px; }
.order .gain { padding: 0 3px; color: #0a960a; }
.order .loss { color: #f00; }
.order small { font-size: 12px; }
.order .kill { width: 20px; border-radius: 0 4px 4px 0; }
.order.low { height: 21px; }
.order .entry { width: 62px; text-align: center; padding-left: 3px; line-height: 19px; background: linear-gradient(#9cff8c, #6cf05c); border-color: #1a8a1a; }
.order.thin { height: 19px; line-height: 18px; }
.credit { position: absolute; left: 2px; bottom: -1px; font-size: 11px; line-height: 14px; }
.buy { position: absolute; bottom: 0; transform: translateX(-50%); height: 18px; padding: 0 3px; line-height: 18px; border: 1px solid #3cbc4c; border-bottom: 0; border-radius: 3px 3px 0 0; background: #beeecb; white-space: nowrap; }

.scale { width: 74px; flex: none; position: relative; border: solid transparent; border-width: 1px 0; }
.tick, .tag { position: absolute; transform: translateY(-50%); white-space: nowrap; line-height: 15px; }
.tick { left: 0; padding: 0 0 1px 6px; }
.tick::before { content: ""; position: absolute; left: 0; top: 8px; width: 4px; height: 1px; background: #71899a; }
.strong { font-weight: bold; }
.tag { left: 4px; padding: 0 1px; height: 17px; border: 1px solid #71899a; background: linear-gradient(#fff, #ccd9f0); }
.tag.yellow { background: #f6f600; } .tag.gold { background: linear-gradient(#ffe030, #f8c000); } .tag.ask { color: #00e000; background: #fff; }
.tag.timer { font-size: 18px; font-weight: bold; line-height: 22px; height: 24px; right: 0; border: 1px solid #80d880; background: linear-gradient(#b4ffb4, #84dc84); overflow: hidden; }

.m-red { stroke: #ff1818; stroke-width: 1px; } .m-blue { stroke: #3838e0; stroke-width: 1px; }
.s-green { stroke: #0c7a20; stroke-width: 1px; } .s-red { stroke: #d41420; stroke-width: 1px; }
.hist .up { fill: #30e020; stroke: #0a8a0a; } .hist .down { fill: #ff4a18; stroke: #c01800; }
.vols .up { fill: url(#gVolUp); stroke: #087808; } .vols .down { fill: url(#gVolDown); stroke: #a80000; }

.times { height: 22px; flex: none; padding: 0 75px 0 1px; border-bottom: 1px solid #6d8794; }
.track-t { position: relative; height: 100%; }
.time { position: absolute; top: 5px; transform: translateX(-50%); white-space: nowrap; }
.time::before { content: ""; position: absolute; left: 50%; top: -5px; width: 1px; height: 4px; background: #71899a; }
.time.cursor { padding: 0 1px; background: #f6f600; border: 1px solid #71899a; line-height: 14px; }

.foot { height: 34px; flex: none; display: flex; align-items: center; padding-right: 0; background: linear-gradient(#afcdda, #9bb9c5 70%); border-top: 1px solid #dceaf0; }
.share { width: 78px; height: 25px; margin: 0 4px 0 1px; gap: 4px; border-radius: 3px; border: 1px solid #1b74b8; background: linear-gradient(#36a0e8, #1f80cc); color: #fff; }
.fb { width: 32px; }
.fz { width: 32px; }
.scroll { flex: 1; display: flex; height: 18px; margin: 0 1px 0 -1px; }
.scroll button { width: 18px; border: 1px solid #71899a; border-radius: 3px; background: linear-gradient(#b9d6e2, #a3c2cf); }
.rail { flex: 1; display: grid; grid-template-columns: 1146fr 331fr 60fr; border: solid #71899a; border-width: 1px 0; background: #9ab6c2; }
.thumb { display: flex; align-items: center; justify-content: center; background: linear-gradient(#b4d2df, #9fbfcc); border: solid #71899a; border-width: 0 1px; border-radius: 3px; }
.thumb i { width: 6px; height: 5px; background: repeating-linear-gradient(#71899a 0 1px, transparent 1px 2px); }
</style>
